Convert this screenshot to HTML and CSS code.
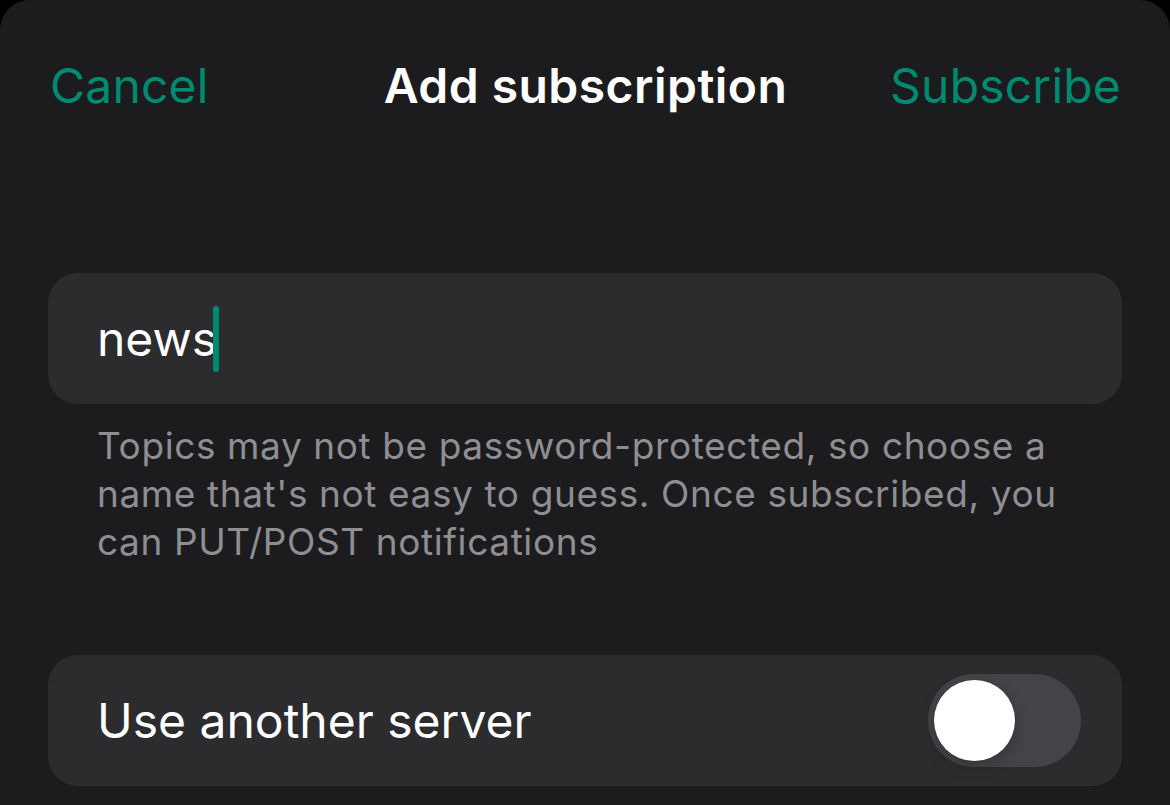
FILE: index.html
```html
<!DOCTYPE html>
<html>
<head>
<meta charset="utf-8">
<link rel="stylesheet" href="styles.css">
</head>
<body>
<div class="sheet">
  <header class="nav">
    <span class="nav-btn left">Cancel</span>
    <span class="nav-title">Add subscription</span>
    <span class="nav-btn right">Subscribe</span>
  </header>
  <section class="group">
    <div class="field">
      <span class="field-text">news</span><span class="caret"></span>
    </div>
    <p class="footer">Topics may not be password-protected, so choose a name that's not easy to guess. Once subscribed, you can PUT/POST notifications</p>
  </section>
  <section class="group">
    <div class="field row">
      <span class="row-label">Use another server</span>
      <span class="toggle"><span class="knob"></span></span>
    </div>
  </section>
</div>
</body>
</html>
```
FILE: styles.css
```css
html, body {
  margin: 0;
  padding: 0;
  background: #000;
  height: 100%;
  overflow: hidden;
}
body {
  font-family: Inter, "Noto Sans", sans-serif;
  -webkit-font-smoothing: antialiased;
}
.sheet {
  background: #1c1c1e;
  border-radius: 30px 30px 0 0;
  height: 805px;
  box-sizing: border-box;
  padding: 0 48px 0 48px;
}
.nav {
  display: grid;
  grid-template-columns: 1fr auto 1fr;
  align-items: center;
  height: 170px;
  padding: 0 1px 0 2px;
}
.nav-btn {
  color: #008a71;
  font-size: 48px;
  letter-spacing: 0.2px;
}
.nav-btn.right {
  justify-self: end;
}
.nav-title {
  color: #fff;
  font-size: 48px;
  font-weight: 600;
  letter-spacing: 0.45px;
}
.group {
  margin-top: 103px;
}
.field {
  background: #2c2c2e;
  border-radius: 30px;
  height: 131px;
  display: flex;
  align-items: center;
  padding: 0 49px;
  box-sizing: border-box;
}
.field-text {
  color: #fff;
  font-size: 48px;
}
.caret {
  display: inline-block;
  width: 6px;
  height: 66px;
  border-radius: 3px;
  background: #008a71;
  margin-left: -4px;
}
.footer {
  margin: 18px 0 0;
  padding: 0 49px;
  color: #8e8e93;
  font-size: 37px;
  line-height: 48px;
  letter-spacing: 0.6px;
}
.group + .group {
  margin-top: 89px;
}
.row {
  justify-content: space-between;
  padding-right: 41px;
}
.row-label {
  color: #fff;
  font-size: 48px;
}
.toggle {
  width: 153px;
  height: 93px;
  border-radius: 47px;
  background: #444448;
  position: relative;
}
.knob {
  position: absolute;
  left: 6px;
  top: 6px;
  width: 81px;
  height: 81px;
  border-radius: 50%;
  background: #fff;
  box-shadow: 0 6px 16px rgba(0,0,0,0.2), 0 0 0 1px rgba(0,0,0,0.05);
}
```
